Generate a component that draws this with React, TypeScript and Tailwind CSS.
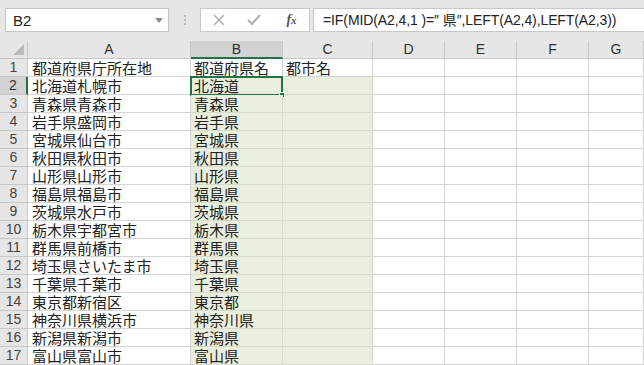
import React from "react";

const rows: [string, string, string][] = [
  ["都道府県庁所在地", "都道府県名", "都市名"],
  ["北海道札幌市", "北海道", ""],
  ["青森県青森市", "青森県", ""],
  ["岩手県盛岡市", "岩手県", ""],
  ["宮城県仙台市", "宮城県", ""],
  ["秋田県秋田市", "秋田県", ""],
  ["山形県山形市", "山形県", ""],
  ["福島県福島市", "福島県", ""],
  ["茨城県水戸市", "茨城県", ""],
  ["栃木県宇都宮市", "栃木県", ""],
  ["群馬県前橋市", "群馬県", ""],
  ["埼玉県さいたま市", "埼玉県", ""],
  ["千葉県千葉市", "千葉県", ""],
  ["東京都新宿区", "東京都", ""],
  ["神奈川県横浜市", "神奈川県", ""],
  ["新潟県新潟市", "新潟県", ""],
  ["富山県富山市", "富山県", ""],
];

const cols = ["A", "B", "C", "D", "E", "F", "G"];
const gridCols = "grid grid-cols-[28px_163px_92px_90px_72px_72px_72px_1fr]";
const cellFont = "font-['Noto_Sans_CJK_JP','Noto_Sans_CJK_SC',sans-serif]";

export default function App() {
  return (
    <div className="w-[644px] h-[365px] overflow-hidden bg-white relative font-['Liberation_Sans',Arial,sans-serif] text-[#222]">
      {/* formula bar */}
      <div className="h-[41px] bg-[#e6e6e6] flex items-start pt-[8px]">
        <div className="ml-[5px] w-[164px] h-[24px] bg-white border border-[#c8c8c8] flex items-center justify-between pl-[7px] pr-[5px]">
          <span className="text-[15px] leading-none text-[#222]">B2</span>
          <svg width="8" height="5" viewBox="0 0 8 5"><path d="M0 0 L8 0 L4 5 Z" fill="#8a8a8a" /></svg>
        </div>
        <div className="w-[31px] h-[24px] flex flex-col items-center justify-center gap-[2px]">
          <div className="w-[2px] h-[2px] bg-[#b4b4b4]" />
          <div className="w-[2px] h-[2px] bg-[#b4b4b4]" />
          <div className="w-[2px] h-[2px] bg-[#b4b4b4]" />
        </div>
        <div className="w-[110px] h-[24px] bg-white border border-[#c8c8c8] flex items-center">
          <div className="w-[36px] flex justify-center">
            <svg width="12" height="12" viewBox="0 0 12 12"><path d="M1 1 L11 11 M11 1 L1 11" stroke="#a8a8a8" strokeWidth="1.4" /></svg>
          </div>
          <div className="w-[33px] flex justify-center">
            <svg width="14" height="12" viewBox="0 0 14 12"><path d="M1 6 L5 10 L13 1" stroke="#b0b0b0" strokeWidth="2" fill="none" /></svg>
          </div>
          <div className="flex-1 flex justify-center pl-[4px]">
            <span className="font-['Liberation_Serif',serif] italic text-[14px] leading-none text-[#555] font-bold">f<span className="text-[11px]">x</span></span>
          </div>
        </div>
        <div className="ml-[3px] flex-1 h-[24px] bg-white border border-[#c8c8c8] border-r-0 flex items-center pl-[9px]">
          <span className="text-[14px] leading-none tracking-[-0.1px] font-['Liberation_Sans','Noto_Sans_CJK_JP',sans-serif] whitespace-nowrap">
            =IF(MID(A2,4,1 )=″ 県″,LEFT(A2,4),LEFT(A2,3))
          </span>
        </div>
      </div>

      {/* column headers */}
      <div className={`${gridCols} h-[18px] bg-[#e6e6e6]`}>
        <div className="relative border-r border-b border-[#c8c8c8] h-[18px]">
          <svg className="absolute right-[3px] bottom-[3px]" width="11" height="11" viewBox="0 0 11 11"><path d="M11 0 L11 11 L0 11 Z" fill="#b9b9b9" /></svg>
        </div>
        {cols.map((c) => (
          <div
            key={c}
            className={
              c === "B"
                ? "h-[18px] bg-[#d2d2d2] border-r border-[#c8c8c8] border-b-2 border-b-[#217346] flex items-center justify-center text-[14px] text-[#2b2b2b]"
                : "h-[18px] border-r border-b border-[#c8c8c8] flex items-center justify-center text-[14px] text-[#333]"
            }
          >
            {c}
          </div>
        ))}
        <div className="h-[18px] border-b border-[#c8c8c8]" />
      </div>

      {/* rows */}
      {rows.map((r, i) => {
        const rowNum = i + 1;
        const sel = rowNum >= 2;
        return (
          <div key={i} className={`${gridCols} h-[18px]`}>
            <div
              className={
                rowNum === 2
                  ? "h-[18px] bg-[#d2d2d2] border-r-2 border-r-[#217346] border-b border-b-[#c8c8c8] flex items-center justify-center text-[14px] text-[#333]"
                  : "h-[18px] bg-[#e6e6e6] border-r border-b border-[#c8c8c8] flex items-center justify-center text-[14px] text-[#444]"
              }
            >
              {rowNum}
            </div>
            <div className={`h-[18px] border-r border-b border-[#d4d4d4] pl-[4px] text-[15px] leading-[18px] whitespace-nowrap ${cellFont}`}>
              {r[0]}
            </div>
            <div
              className={`relative h-[18px] border-r border-b ${sel ? "bg-[#e9efdc] border-[#d6dccb]" : "border-[#d4d4d4]"} pl-[3px] text-[15px] leading-[18px] whitespace-nowrap ${cellFont}`}
            >
              {r[1]}
              {rowNum === 2 && (
                <div className="absolute -left-[1px] -top-[1px] w-[93px] h-[20px] border-2 border-[#217346]">
                  <div className="absolute -right-[4px] -bottom-[4px] w-[6px] h-[6px] bg-[#217346] border border-white" />
                </div>
              )}
            </div>
            <div
              className={`h-[18px] border-r border-b ${sel ? "bg-[#e9efdc] border-[#d6dccb]" : "border-[#d4d4d4]"} pl-[3px] text-[15px] leading-[18px] whitespace-nowrap ${cellFont}`}
            >
              {r[2]}
            </div>
            <div className="h-[18px] border-r border-b border-[#d4d4d4]" />
            <div className="h-[18px] border-r border-b border-[#d4d4d4]" />
            <div className="h-[18px] border-r border-b border-[#d4d4d4]" />
            <div className="h-[18px] border-r border-b border-[#d4d4d4]" />
            <div className="h-[18px] border-b border-[#d4d4d4]" />
          </div>
        );
      })}
    </div>
  );
}
